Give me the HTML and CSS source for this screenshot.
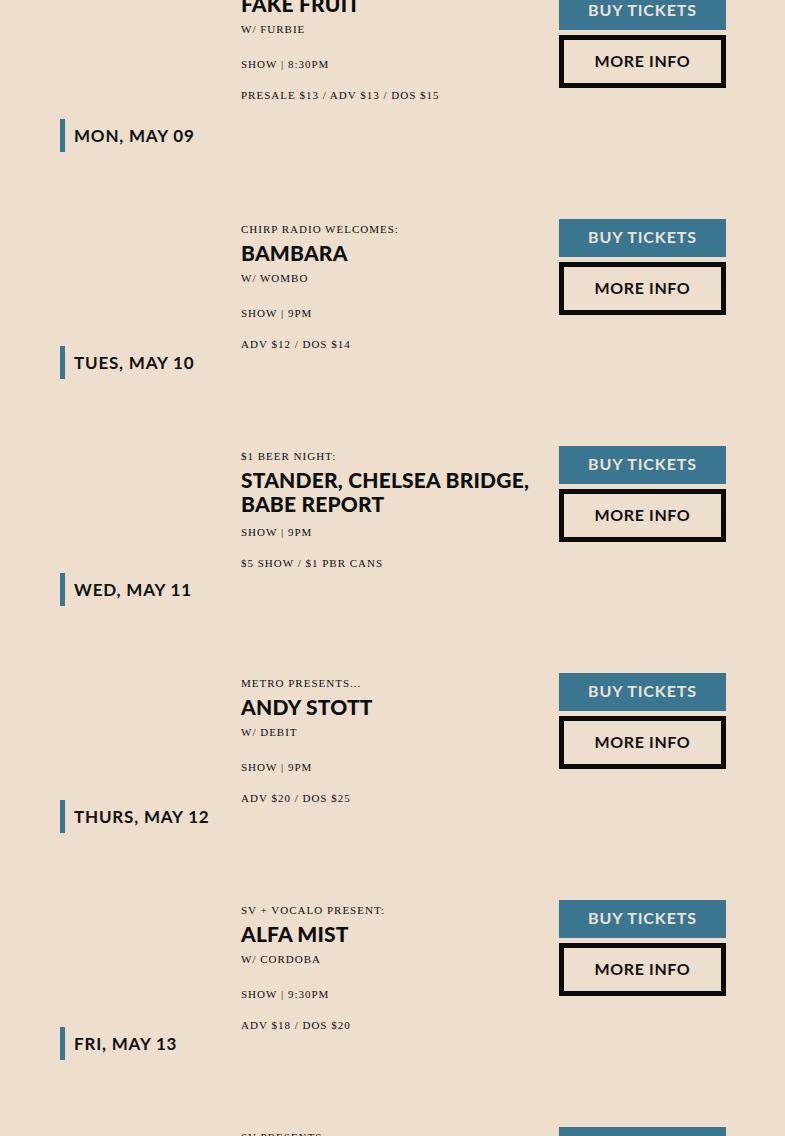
FILE: index.html
```html
<!DOCTYPE html>
<html lang="en">
<head>
<meta charset="utf-8">
<title>Events</title>
<link rel="stylesheet" href="styles.css">
</head>
<body>
<main class="events">
  <article class="event">
    <div class="when"><div class="date">MON, MAY 09</div></div>
    <div class="info">
      <h2 class="title">FAKE FRUIT</h2>
      <p class="support">W/ FURBIE</p>
      <p class="show">SHOW | 8:30PM</p>
      <p class="price">PRESALE $13 / ADV $13 / DOS $15</p>
    </div>
    <div class="actions"><a class="buy">BUY TICKETS</a><a class="more">MORE INFO</a></div>
  </article>
  <article class="event">
    <div class="when"><div class="date">TUES, MAY 10</div></div>
    <div class="info">
      <p class="pre">CHIRP RADIO WELCOMES:</p>
      <h2 class="title">BAMBARA</h2>
      <p class="support">W/ WOMBO</p>
      <p class="show">SHOW | 9PM</p>
      <p class="price">ADV $12 / DOS $14</p>
    </div>
    <div class="actions"><a class="buy">BUY TICKETS</a><a class="more">MORE INFO</a></div>
  </article>
  <article class="event">
    <div class="when"><div class="date">WED, MAY 11</div></div>
    <div class="info">
      <p class="pre">$1 BEER NIGHT:</p>
      <h2 class="title">STANDER, CHELSEA BRIDGE, BABE REPORT</h2>
      <p class="show">SHOW | 9PM</p>
      <p class="price">$5 SHOW / $1 PBR CANS</p>
    </div>
    <div class="actions"><a class="buy">BUY TICKETS</a><a class="more">MORE INFO</a></div>
  </article>
  <article class="event">
    <div class="when"><div class="date">THURS, MAY 12</div></div>
    <div class="info">
      <p class="pre">METRO PRESENTS...</p>
      <h2 class="title">ANDY STOTT</h2>
      <p class="support">W/ DEBIT</p>
      <p class="show">SHOW | 9PM</p>
      <p class="price">ADV $20 / DOS $25</p>
    </div>
    <div class="actions"><a class="buy">BUY TICKETS</a><a class="more">MORE INFO</a></div>
  </article>
  <article class="event">
    <div class="when"><div class="date">FRI, MAY 13</div></div>
    <div class="info">
      <p class="pre">SV + VOCALO PRESENT:</p>
      <h2 class="title">ALFA MIST</h2>
      <p class="support">W/ CORDOBA</p>
      <p class="show">SHOW | 9:30PM</p>
      <p class="price">ADV $18 / DOS $20</p>
    </div>
    <div class="actions"><a class="buy">BUY TICKETS</a><a class="more">MORE INFO</a></div>
  </article>
  <article class="event">
    <div class="when"><div class="date">SAT, MAY 14</div></div>
    <div class="info">
      <p class="pre">SV PRESENTS:</p>
      <h2 class="title">LATE SHOW</h2>
      <p class="show">SHOW | 9PM</p>
      <p class="price">ADV $15 / DOS $18</p>
    </div>
    <div class="actions"><a class="buy">BUY TICKETS</a><a class="more">MORE INFO</a></div>
  </article>
</main>
</body>
</html>
```

FILE: styles.css
```css
html, body {
  margin: 0;
  padding: 0;
  background: #eddecd;
  color: #111;
}

.events {
  padding: 0 59px 0 60px;
  margin-top: -8px;
}

.event {
  display: grid;
  grid-template-columns: 181px 1fr 167px;
  margin-bottom: 67px;
}

.when {
  padding-top: 127px;
}

.date {
  height: 33px;
  border-left: 5px solid #3b7690;
  padding-left: 9px;
  display: flex;
  align-items: center;
  font-family: "Lato", sans-serif;
  font-weight: 700;
  font-size: 17px;
  letter-spacing: 0.8px;
}

.info {
  padding-right: 14px;
  font-family: "Liberation Serif", serif;
  font-size: 11px;
  letter-spacing: 1px;
  color: #0e0e0e;
}

.info p {
  margin: 0;
  line-height: 20px;
}

.pre {
  margin-bottom: 2px !important;
}

.title {
  margin: 0 0 6px;
  font-family: "Lato", sans-serif;
  font-weight: 900;
  font-size: 21px;
  line-height: 24px;
  letter-spacing: 0.2px;
}

.support {
  margin-top: -3px !important;
  margin-bottom: 15px !important;
}

.show {
  margin-bottom: 11px !important;
}

.actions {
  display: flex;
  flex-direction: column;
  gap: 5px;
}

.buy, .more {
  display: flex;
  align-items: center;
  justify-content: center;
  box-sizing: border-box;
  font-family: "Lato", sans-serif;
  font-weight: 700;
  font-size: 16px;
}

.buy {
  height: 38px;
  padding-bottom: 3px;
  background: #3b7690;
  color: #ece3d6;
  letter-spacing: 0.9px;
}

.more {
  height: 53px;
  padding-bottom: 3px;
  border: 5px solid #0b0b0b;
  color: #111;
  letter-spacing: 0.6px;
}
```
